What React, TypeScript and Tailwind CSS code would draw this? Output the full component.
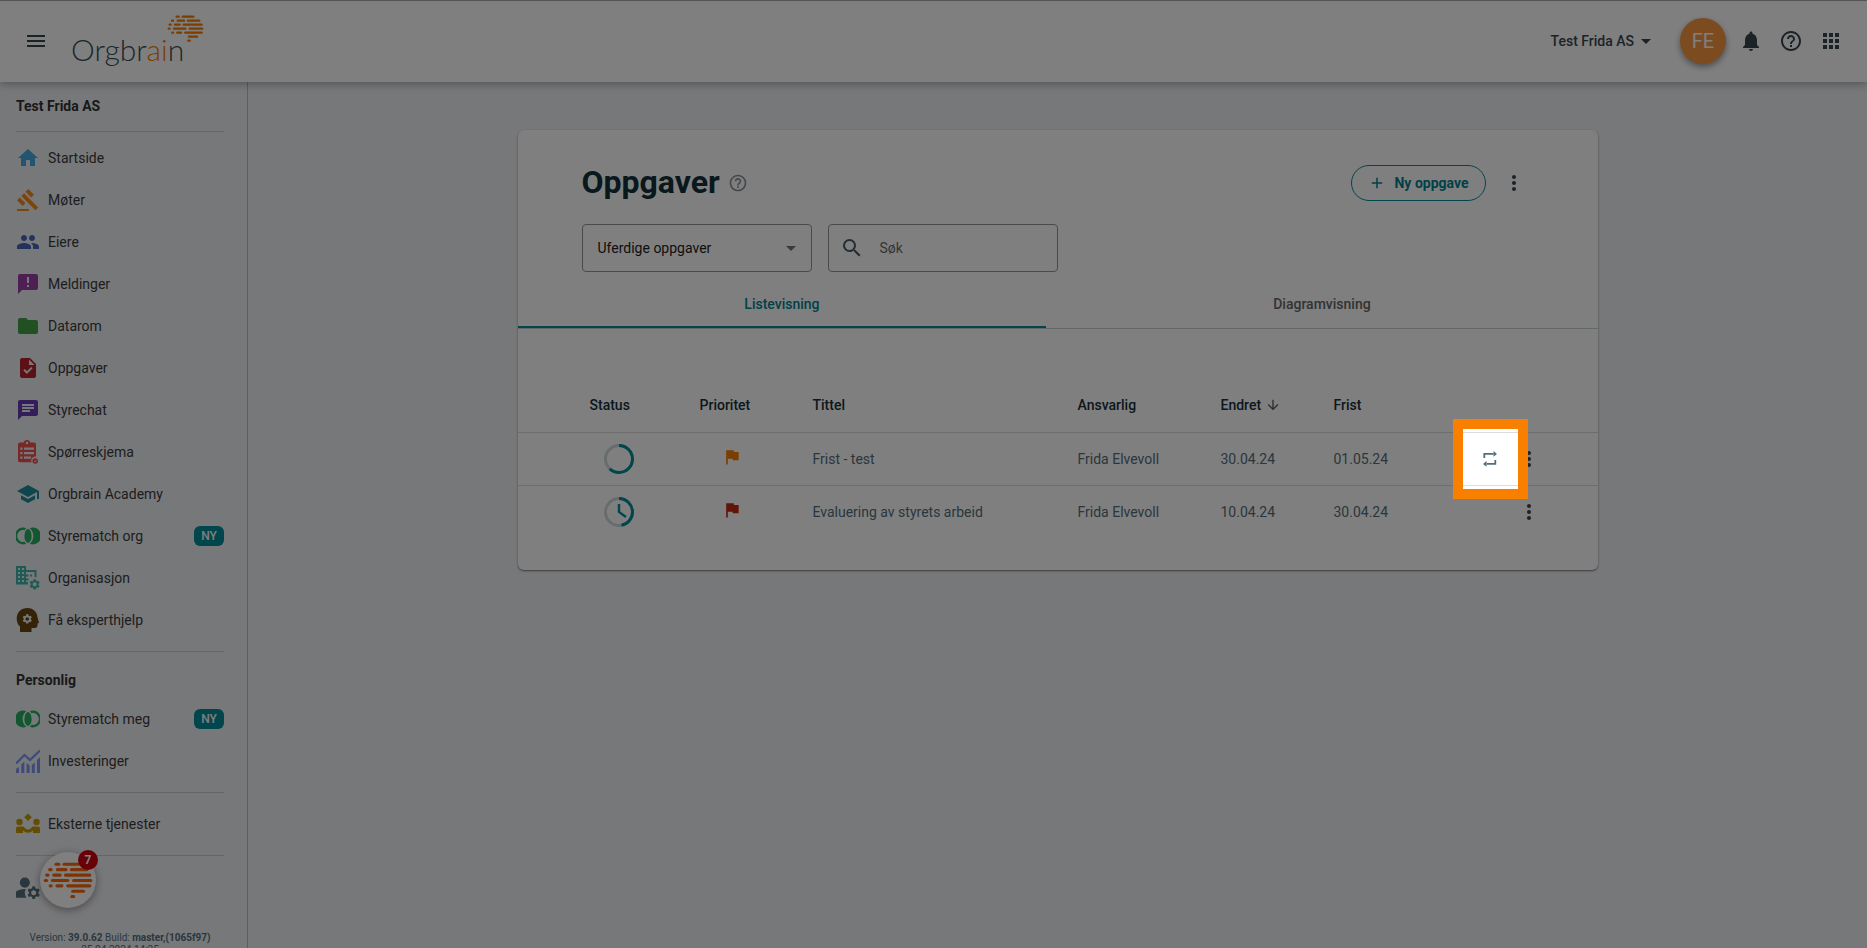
import React from "react";
import {
  MdAdd,
  MdAnnouncement,
  MdApps,
  MdArrowDownward,
  MdArrowDropDown,
  MdChat,
  MdFlag,
  MdFolder,
  MdGavel,
  MdHelpOutline,
  MdHome,
  MdJoinLeft,
  MdJoinRight,
  MdManageAccounts,
  MdMenu,
  MdMoreVert,
  MdNotifications,
  MdPeople,
  MdSchool,
  MdSearch,
  MdTask,
} from "react-icons/md";

interface NavItemProps {
  label: string;
  icon: React.ReactNode;
  isNew?: boolean;
}

interface Task {
  title: string;
  owner: string;
  changed: string;
  due: string;
  progress: number;
  started: boolean;
  flag: string;
  recurring: boolean;
}

// [x1, x2, y] for every dash in the brain mark
const brainDashes = [
  [29, 35, 5],
  [47, 79, 5],
  [15, 18, 17],
  [32, 51, 17],
  [63, 97, 17],
  [8, 11, 29],
  [24, 38, 29],
  [50, 104, 29],
  [5, 8, 41],
  [21, 55, 41],
  [68, 106, 41],
  [16, 18, 53],
  [31, 42, 53],
  [55, 104, 53],
  [66, 90, 65],
  [64, 68, 77],
];

const BrainMark = ({ className }: { className: string }) => (
  <svg
    viewBox="0 0 111 82"
    className={className}
    fill="none"
    stroke="currentColor"
    strokeWidth={7}
    strokeLinecap="round"
    aria-hidden="true"
  >
    {brainDashes.map(([x1, x2, y]) => (
      <path key={`${x1}-${y}`} d={`M${x1} ${y}H${x2}`} />
    ))}
  </svg>
);

const gearPath =
  "M19.14 12.94c.04-.3.06-.61.06-.94 0-.32-.02-.64-.07-.94l2.03-1.58a.49.49 0 0 0 .12-.61l-1.92-3.32a.49.49 0 0 0-.59-.22l-2.39.96c-.5-.38-1.03-.7-1.62-.94l-.36-2.54a.48.48 0 0 0-.48-.41h-3.84a.48.48 0 0 0-.47.41l-.36 2.54c-.59.24-1.13.57-1.62.94l-2.39-.96a.48.48 0 0 0-.59.22L2.74 8.87a.48.48 0 0 0 .12.61l2.03 1.58c-.05.3-.09.63-.09.94s.02.64.07.94l-2.03 1.58a.49.49 0 0 0-.12.61l1.92 3.32c.12.22.37.29.59.22l2.39-.96c.5.38 1.03.7 1.62.94l.36 2.54c.05.24.24.41.48.41h3.84c.24 0 .44-.17.47-.41l.36-2.54c.59-.24 1.13-.56 1.62-.94l2.39.96c.22.08.47 0 .59-.22l1.92-3.32a.48.48 0 0 0-.12-.61l-2.01-1.58zM12 15.8a3.8 3.8 0 1 1 0-7.6 3.8 3.8 0 0 1 0 7.6z";

const SurveyIcon = () => (
  <svg viewBox="0 0 24 24" className="size-6 text-[#ef5350]" fill="currentColor" aria-hidden="true">
    <path
      fillRule="evenodd"
      d="M4 2.5h3.6a3.6 3.6 0 0 1 6.800 0H18a2 2 0 0 1 2 2V16.500a4 4 0 0 0-4.400 5.700H4a2 2 0 0 1-2-2V4.500a2 2 0 0 1 2-2zM11 1.800a1.200 1.200 0 1 0 0 2.400 1.200 1.200 0 0 0 0-2.400zM4.300 7.500v2.200h2.200V7.500zm3.700 0v2.200h10V7.500zm-3.700 4.500v2.200h2.200V12zm3.700 0v2.200h10V12zm-3.700 4.500v2.200h2.200v-2.200zm3.700 0v2.200h7v-2.200z"
    />
    <circle cx="19.200" cy="21" r="2.800" />
    <path d="M17.900 21l1 1 1.700-2" fill="none" stroke="#eff0f4" strokeWidth=".8" />
  </svg>
);

const OrganisationIcon = () => (
  <svg viewBox="0 0 24 24" className="size-6 text-[#3fb6a8]" fill="currentColor" aria-hidden="true">
    <path
      fillRule="evenodd"
      d="M0 0h10v4h10.500v7h-2V6H10v2.500h2.500v2H10v2h2.500v2H10V16h2v2.500H0zM2 2v2h2V2zm4 0v2h2V2zM2 6v2h2V6zm4 0v2h2V6zm-4 4v2h2v-2zm4 0v2h2v-2zm-4 4v2h2v-2zm4 0v2h2v-2zM14 8.500h2v2h-2z"
    />
    <path fillRule="evenodd" d={gearPath} transform="translate(12.300 12) scale(.53)" />
  </svg>
);

const ExpertIcon = () => (
  <svg viewBox="0 0 24 24" className="size-6 text-[#6b4710]" fill="currentColor" aria-hidden="true">
    <path d="M11.500 0C17.500 0 21.500 4.500 21.500 9.500L23 14.500q0 .8-.8.8h-.7V17.500c0 1.500-1 2.500-2.500 2.500h-3.500V24H4V18.500C1.800 16.500.7 13.500.7 10.700.7 4.500 5 0 11.500 0z" />
    <path fill="#eff0f4" fillRule="evenodd" d={gearPath} transform="translate(5.500 5.200) scale(.48)" />
  </svg>
);

const InvestmentIcon = () => (
  <svg viewBox="0 0 24 24" className="size-6 text-[#7a94f5]" aria-hidden="true">
    <path d="M0 14.500L8.500 6l5.500 5L24 1.500" fill="none" stroke="currentColor" strokeWidth="2.200" />
    <path
      d="M0 20l3-2v6H0zM5.300 15.500l3-3V24h-3zM10.600 14l3 2.500V24h-3zM15.800 16l3-2.500V24h-3zM21 11l3-3v16h-3z"
      fill="currentColor"
    />
  </svg>
);

const PartnersIcon = () => (
  <svg viewBox="0 0 24 24" className="size-6 text-[#c69a07]" fill="currentColor" aria-hidden="true">
    <path d="M12 1.500l3.800 3.800L12 9.100 8.200 5.300z" />
    <circle cx="3.500" cy="10" r="3.200" />
    <circle cx="20.500" cy="10" r="3.200" />
    <path d="M0 21v-4.500a2 2 0 0 1 2-2h4.500c.8 0 1.500.5 1.900 1.100A4.400 4.400 0 0 0 12 17.500c1.500 0 2.800-.7 3.600-1.900.4-.6 1.100-1.100 1.900-1.100H22a2 2 0 0 1 2 2V21h-7v-2.600a6.500 6.500 0 0 1-10 0V21z" />
  </svg>
);

const RecurringIcon = () => (
  <svg viewBox="0 0 16 16" className="size-4" fill="none" stroke="currentColor" strokeWidth="1.800" aria-hidden="true">
    <path d="M2.300 7V2.900h9.200M13.300 9v3.900H4.500" />
    <path d="M11.500 0v5.800l3.500-2.900zM4.500 10v5.800L1 12.900z" fill="currentColor" stroke="none" />
  </svg>
);

const orgItems: NavItemProps[] = [
  { label: "Startside", icon: <MdHome className="size-6 text-[#46a9e0]" /> },
  { label: "Møter", icon: <MdGavel className="size-6 text-[#f68b1f]" /> },
  { label: "Eiere", icon: <MdPeople className="size-6 text-[#4a64b8]" /> },
  { label: "Meldinger", icon: <MdAnnouncement className="size-6 text-[#9c3fa6]" /> },
  { label: "Datarom", icon: <MdFolder className="size-6 text-[#43a047]" /> },
  { label: "Oppgaver", icon: <MdTask className="size-6 text-[#b7232b]" /> },
  { label: "Styrechat", icon: <MdChat className="size-6 text-[#673ab7]" /> },
  { label: "Spørreskjema", icon: <SurveyIcon /> },
  { label: "Orgbrain Academy", icon: <MdSchool className="size-6 text-[#1d8c9a]" /> },
  {
    label: "Styrematch org",
    icon: <MdJoinRight viewBox="2 2 20 20" className="size-6 text-[#27ae60]" />,
    isNew: true,
  },
  { label: "Organisasjon", icon: <OrganisationIcon /> },
  { label: "Få eksperthjelp", icon: <ExpertIcon /> },
];

const personalItems: NavItemProps[] = [
  {
    label: "Styrematch meg",
    icon: <MdJoinLeft viewBox="2 2 20 20" className="size-6 text-[#27ae60]" />,
    isNew: true,
  },
  { label: "Investeringer", icon: <InvestmentIcon /> },
];

const tasks: Task[] = [
  {
    title: "Frist - test",
    owner: "Frida Elvevoll",
    changed: "30.04.24",
    due: "01.05.24",
    progress: 62,
    started: false,
    flag: "text-[#f57c00]",
    recurring: true,
  },
  {
    title: "Evaluering av styrets arbeid",
    owner: "Frida Elvevoll",
    changed: "10.04.24",
    due: "30.04.24",
    progress: 47,
    started: true,
    flag: "text-[#c62810]",
    recurring: false,
  },
];

const NavItem: React.FC<NavItemProps> = ({ label, icon, isNew = false }) => (
  <li>
    <a href="#" className="flex h-[42px] items-center gap-2 text-sm text-[#3c3c3c]">
      {icon}
      <span>{label}</span>
      {isNew && (
        <span className="ml-auto flex h-5 w-[30px] items-center justify-center rounded-md bg-[#008c99] text-xs font-medium text-white">
          NY
        </span>
      )}
    </a>
  </li>
);

const StatusRing = ({ progress, started }: { progress: number; started: boolean }) => (
  <svg viewBox="0 0 30 30" className="size-[30px]" fill="none" strokeWidth={3} aria-hidden="true">
    <circle cx="15" cy="15" r="13.500" stroke="#cfd8dc" />
    <circle
      cx="15"
      cy="15"
      r="13.500"
      stroke="#008c99"
      pathLength={100}
      strokeDasharray={`${progress} 100`}
      transform="rotate(-90 15 15)"
    />
    {started && <path d="M15 7v8l7 5" stroke="#008c99" strokeWidth={2.400} />}
  </svg>
);

const Header = () => (
  <header className="relative z-10 flex h-[82px] shrink-0 items-center border-t border-[#a8a8a8] bg-white px-6 pb-[2px] text-[#37474f] shadow-[0_2px_8px_rgba(0,0,0,0.3)]">
    <button type="button" aria-label="Meny">
      <MdMenu className="size-6" />
    </button>
    <a href="#" className="relative ml-[23px] pt-4 font-[Lato,sans-serif] text-[30px] leading-9 font-light text-[#37505c]">
      Orgbr<span className="text-[#f57c00]">ai</span>n
      <BrainMark className="absolute top-0 left-24 w-[37px] text-[#f57c00]" />
    </a>
    <div className="ml-auto flex items-center">
      <button type="button" className="flex items-center text-sm font-medium">
        Test Frida AS
        <MdArrowDropDown className="size-6" />
      </button>
      <button
        type="button"
        className="ml-[22px] flex size-[46px] items-center justify-center rounded-full bg-[#fb9740] text-xl text-white shadow-[0_3px_6px_rgba(0,0,0,0.4)]"
      >
        FE
      </button>
      <div className="ml-[13px] flex items-center gap-4">
        <button type="button" aria-label="Varsler">
          <MdNotifications className="size-6" />
        </button>
        <button type="button" aria-label="Hjelp">
          <MdHelpOutline className="size-6" />
        </button>
        <button type="button" aria-label="Apper">
          <MdApps className="size-6" />
        </button>
      </div>
    </div>
  </header>
);

const Sidebar = () => (
  <aside className="relative w-[248px] shrink-0 border-r border-[#b8bcc2] bg-[#eff0f4] pr-[23px] pl-4">
    <h2 className="flex h-[49px] items-center pb-[2px] text-sm font-bold text-[#333]">Test Frida AS</h2>
    <ul className="border-t border-[#cbcdd1] pt-[5px] pb-[10px]">
      {orgItems.map((item) => (
        <NavItem key={item.label} {...item} />
      ))}
    </ul>
    <h2 className="flex h-[47px] items-center border-t border-[#cbcdd1] pt-[10px] text-sm font-bold text-[#333]">
      Personlig
    </h2>
    <ul className="pb-[10px]">
      {personalItems.map((item) => (
        <NavItem key={item.label} {...item} />
      ))}
    </ul>
    <ul className="border-t border-[#cbcdd1] py-[10px]">
      <NavItem label="Eksterne tjenester" icon={<PartnersIcon />} />
    </ul>
    <div className="flex h-[77px] items-center border-t border-[#cbcdd1] pb-[14px]">
      <a href="#" aria-label="Min profil">
        <MdManageAccounts viewBox="3 2 19 19" className="size-6 text-[#546e7a]" />
      </a>
    </div>
    <p className="text-center text-[10px] leading-3 text-[#546e7a]">
      Version: <b>39.0.62</b> Build: <b>master,(1065f97)</b>
      <br />
      25.04.2024 14:25
    </p>

    {/* Chat launcher */}
    <button
      type="button"
      aria-label="Åpne chat"
      className="absolute top-[770px] left-10 flex size-14 items-center justify-center rounded-full bg-white shadow-[0_2px_8px_rgba(0,0,0,0.4)]"
    >
      <BrainMark className="w-[50px] text-[#f8690c]" />
      <span className="absolute -top-[2px] -right-[2px] flex size-5 items-center justify-center rounded-full bg-[#d0000c] text-xs font-bold text-white">
        7
      </span>
    </button>
  </aside>
);

const TaskTable = () => (
  <table className="mt-[49px] w-full table-fixed text-left text-sm">
    <colgroup>
      <col className="w-[182px]" />
      <col className="w-[113px]" />
      <col />
      <col className="w-[143px]" />
      <col className="w-[113px]" />
      <col className="w-[136px]" />
      <col className="w-[41px]" />
      <col className="w-[87px]" />
    </colgroup>
    <thead className="text-[#16303b]">
      <tr className="h-[54px] border-b border-[#dcdcdc] [&>th]:font-medium">
        <th className="pl-[72px]">Status</th>
        <th>Prioritet</th>
        <th>Tittel</th>
        <th>Ansvarlig</th>
        <th>
          <span className="flex items-center gap-1">
            Endret
            <MdArrowDownward className="size-4 text-[#5a5a5a]" />
          </span>
        </th>
        <th>Frist</th>
        <th />
        <th />
      </tr>
    </thead>
    <tbody className="text-[#546e7a]">
      {tasks.map((task) => (
        <tr key={task.title} className="h-[53px] border-b border-[#dcdcdc] last:border-b-0">
          <td className="pl-[86px]">
            <StatusRing progress={task.progress} started={task.started} />
          </td>
          <td className="pb-1 pl-[22px]">
            <MdFlag className={`size-5 ${task.flag}`} />
          </td>
          <td>{task.title}</td>
          <td>{task.owner}</td>
          <td>{task.changed}</td>
          <td>{task.due}</td>
          <td>
            {task.recurring && (
              <button type="button" aria-label="Gjentakende oppgave" className="relative mx-auto block w-[17px]">
                <RecurringIcon />
                {/* Spotlight: the ring stays bright while its spread shadow dims the page */}
                <span className="pointer-events-none absolute -inset-x-[29px] -inset-y-8 z-50 border-10 border-[#f97f00] shadow-[0_0_0_3000px_rgba(0,0,0,0.5)]" />
              </button>
            )}
          </td>
          <td>
            <button type="button" aria-label="Flere valg" className="flex w-9 justify-center text-[#37474f]">
              <MdMoreVert className="size-6" />
            </button>
          </td>
        </tr>
      ))}
    </tbody>
  </table>
);

const App = () => {
  return (
    <div className="flex h-screen flex-col overflow-hidden bg-[#eff0f4] font-[Roboto,sans-serif]">
      <Header />
      <div className="flex min-h-0 flex-1">
        <Sidebar />
        <main className="flex-1 pt-12">
          <section className="mx-auto max-w-[1080px] rounded-md bg-white pb-8 shadow-[0_1px_2px_rgba(0,0,0,0.5)]">
            <div className="flex items-center pt-[31px] pr-[72px] pl-16">
              <h1 className="pb-[2px] text-[32px] leading-[42px] font-bold text-[#13303b]">Oppgaver</h1>
              <MdHelpOutline className="ml-2 size-5 text-[#8a9298]" />
              <button
                type="button"
                className="ml-auto flex h-9 items-center gap-2 rounded-full border border-[#008c99] px-4 text-sm font-bold text-[#008391]"
              >
                <MdAdd className="size-[18px]" />
                Ny oppgave
              </button>
              <button type="button" aria-label="Flere valg" className="ml-4 text-[#37474f]">
                <MdMoreVert className="size-6" />
              </button>
            </div>

            {/* Filters */}
            <div className="mt-[19px] flex gap-4 px-16">
              <div className="relative">
                <select
                  aria-label="Filter"
                  className="h-12 w-[230px] appearance-none rounded border border-[#949494] bg-white px-[15px] text-sm text-[#212121]"
                >
                  <option>Uferdige oppgaver</option>
                </select>
                <MdArrowDropDown className="pointer-events-none absolute top-3 right-[9px] size-6 text-[#757575]" />
              </div>
              <label className="flex h-12 w-[230px] items-center gap-4 rounded border border-[#949494] px-[11px]">
                <MdSearch className="size-6 text-[#455a64]" />
                <input
                  type="text"
                  aria-label="Søk"
                  placeholder="Søk"
                  className="min-w-0 flex-1 text-sm outline-none placeholder:text-[#6b6b6b]"
                />
              </label>
            </div>

            {/* Tabs */}
            <div role="tablist" className="mt-2 flex h-[49px] border-b border-[#c5d0d4] text-sm font-medium">
              <button
                type="button"
                role="tab"
                aria-selected="true"
                className="flex-auto border-b-2 border-[#008c99] pt-[2px] text-[#008391]"
              >
                Listevisning
              </button>
              <button
                type="button"
                role="tab"
                aria-selected="false"
                className="flex-auto border-b-2 border-transparent pt-[2px] text-[#666]"
              >
                Diagramvisning
              </button>
            </div>

            <TaskTable />
          </section>
        </main>
      </div>
    </div>
  );
};

export default App;
